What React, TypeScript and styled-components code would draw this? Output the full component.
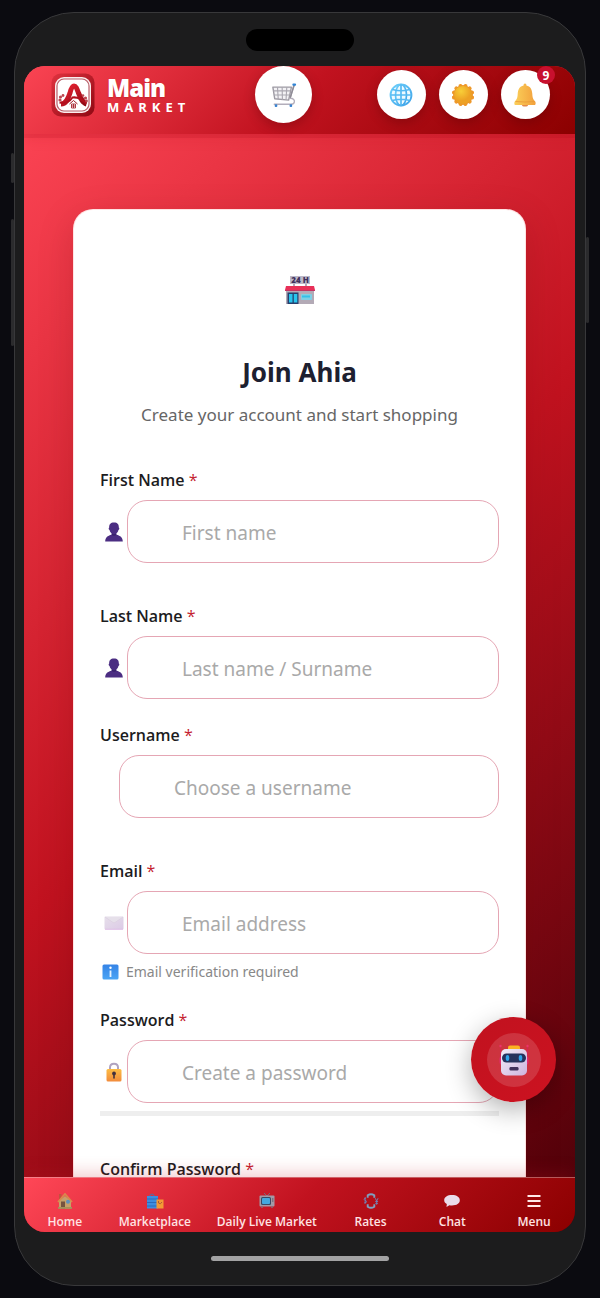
import React from 'react';
import styled, { createGlobalStyle } from 'styled-components';

const GlobalStyle = createGlobalStyle`
  *, *::before, *::after { box-sizing: border-box; }
  body {
    margin: 0;
    background: #0b0b10;
    font-family: "Noto Sans", "Open Sans", sans-serif;
  }
`;

const Page = styled.div`
  display: flex;
  height: 100vh;
  min-height: 640px;
  padding: 12px 14px;
`;

const Phone = styled.div`
  position: relative;
  display: flex;
  flex: 1;
  flex-direction: column;
  min-width: 0;
  padding: 0 10px 0 9px;
  border: 1px solid #38383a;
  border-radius: 60px;
  background: #1c1c1d;
`;

const SideButton = styled.span<{ $side: 'left' | 'right'; $top: number; $length: number }>`
  position: absolute;
  top: ${p => p.$top}px;
  ${p => p.$side}: -4px;
  width: 3px;
  height: ${p => p.$length}px;
  border-radius: 2px;
  background: #2b2b2d;
`;

const TopBezel = styled.div`
  display: flex;
  flex: none;
  justify-content: center;
  height: 53px;
  padding-top: 16px;
`;

const Notch = styled.div`
  width: 108px;
  height: 22px;
  border-radius: 11px;
  background: #000;
`;

const BottomBezel = styled.div`
  display: flex;
  flex: none;
  justify-content: center;
  height: 53px;
  padding-top: 24px;
`;

const HomeIndicator = styled.div`
  width: 178px;
  height: 5px;
  border-radius: 3px;
  background: #a2a2a3;
`;

const Screen = styled.div`
  position: relative;
  display: flex;
  flex: 1;
  flex-direction: column;
  min-height: 0;
  overflow: hidden;
  border-radius: 21px;
  background: linear-gradient(135deg, #ff4757 0%, #c1121f 50%, #4a0008 100%);
`;

const Header = styled.header`
  position: relative;
  z-index: 2;
  display: flex;
  flex: none;
  align-items: center;
  justify-content: space-between;
  padding: 0 25px 11px 27px;
  background: linear-gradient(135deg, #fa4453 0%, #c1121f 50%, #8b0000 100%);
  box-shadow: 0 4px 0 rgba(160, 0, 20, 0.14), 0 4px 12px rgba(193, 18, 31, 0.2);
`;

const Brand = styled.a`
  display: flex;
  align-items: center;
  gap: 12px;
  color: #fff;
  text-decoration: none;
`;

const BrandText = styled.span`
  display: flex;
  flex-direction: column;
`;

const BrandName = styled.span`
  font-size: 24px;
  font-weight: 900;
  line-height: 25px;
  letter-spacing: -1px;
  text-shadow: 0 1px 2px rgba(120, 0, 0, 0.25);
`;

const BrandSub = styled.span`
  font-family: "Open Sans", sans-serif;
  font-size: 13px;
  font-weight: 700;
  line-height: 15px;
  letter-spacing: 5px;
`;

const Actions = styled.div`
  display: flex;
  gap: 13px;
`;

const RoundButton = styled.button<{ $size: number }>`
  position: relative;
  display: grid;
  place-items: center;
  width: ${p => p.$size}px;
  height: ${p => p.$size}px;
  padding: 0;
  border: 0;
  border-radius: 50%;
  background: #fff;
  box-shadow: 0 4px 12px rgba(60, 0, 0, 0.28);
`;

const Badge = styled.span`
  position: absolute;
  top: -4px;
  right: -5px;
  width: 18px;
  height: 18px;
  border-radius: 50%;
  background: #c8102e;
  color: #fff;
  font: 700 12px/19px "Noto Sans", sans-serif;
  text-align: center;
`;

const Content = styled.main`
  flex: 1;
  min-height: 0;
  overflow: hidden;
  padding: 75px 49px 0;
`;

const Card = styled.form`
  padding: 66px 26px 40px;
  border: 1px solid rgba(255, 220, 220, 0.8);
  border-radius: 20px;
  background: #fff;
  box-shadow: 0 10px 36px rgba(90, 0, 10, 0.18);
`;

const Intro = styled.div`
  display: flex;
  flex-direction: column;
  align-items: center;
  margin-bottom: 40px;
  text-align: center;
`;

const Title = styled.h1`
  margin: 49px 0 12px;
  color: #1d2030;
  font-size: 26px;
  font-weight: 700;
  line-height: 36px;
`;

const Subtitle = styled.p`
  margin: 0;
  color: #666;
  font-size: 17px;
  line-height: 26px;
`;

const FieldBlock = styled.div<{ $gap: number }>`
  margin-bottom: ${p => p.$gap}px;
`;

const Label = styled.label`
  display: block;
  margin-bottom: 8px;
  color: #1c1c1e;
  font-family: "Open Sans", sans-serif;
  font-size: 16px;
  font-weight: 600;
  line-height: 24px;
`;

const Required = styled.span`
  color: #c41c30;
  font-weight: 500;
`;

const InputRow = styled.div<{ $indent: boolean }>`
  display: flex;
  align-items: center;
  padding-left: ${p => (p.$indent ? 19 : 0)}px;
`;

const InputIcon = styled.span`
  display: grid;
  flex: none;
  place-items: center;
  width: 27px;
`;

const Input = styled.input`
  flex: 1;
  min-width: 0;
  height: 63px;
  padding: 2px 20px 0 54px;
  border: 1px solid #e5a6b4;
  border-radius: 20px;
  background: #fff;
  color: #1c1c1e;
  font: 400 19px "Noto Sans", sans-serif;
  &::placeholder { color: #a9a9a9; opacity: 1; }
`;

const Hint = styled.p`
  display: flex;
  align-items: center;
  gap: 7px;
  margin: 8px 0 0;
  padding-left: 2px;
  color: #888;
  font-size: 14px;
  line-height: 20px;
`;

const Strength = styled.div`
  height: 5px;
  margin-top: 8px;
  background: #eee;
`;

const Assistant = styled.button`
  position: absolute;
  z-index: 4;
  right: 19px;
  bottom: 130px;
  display: grid;
  place-items: center;
  width: 85px;
  height: 85px;
  padding: 0;
  border: 0;
  border-radius: 50%;
  background: linear-gradient(135deg, #c1121f, #cc1220);
  box-shadow: 0 8px 26px rgba(0, 0, 0, 0.3);
`;

const AssistantCore = styled.span`
  display: grid;
  place-items: center;
  width: 54px;
  height: 54px;
  border-radius: 50%;
  background: rgba(255, 255, 255, 0.14);
`;

const TabBar = styled.nav`
  position: relative;
  z-index: 3;
  display: flex;
  flex: none;
  justify-content: space-around;
  padding: 15px 0 2px;
  border-top: 1px solid rgba(255, 255, 255, 0.35);
  background: linear-gradient(135deg, #ff4757 0%, #c1121f 50%, #8b0000 100%);
  box-shadow: 0 -4px 16px rgba(193, 18, 31, 0.22);
`;

const Tab = styled.a`
  display: flex;
  flex-direction: column;
  align-items: center;
  gap: 5px;
  min-width: 56px;
  color: #ffe3e3;
  font-family: "Open Sans", sans-serif;
  font-size: 12px;
  font-weight: 600;
  line-height: 16px;
  text-decoration: none;
  white-space: nowrap;
`;

const LogoIcon = () => (
  <svg width="44" height="44" viewBox="0 0 44 44" aria-hidden="true">
    <defs>
      <linearGradient id="logoFrame" x1="0" y1="0" x2="1" y2="1">
        <stop offset="0" stopColor="#e0323f" /><stop offset="1" stopColor="#8f0812" />
      </linearGradient>
      <linearGradient id="logoA" x1="0" y1="0" x2="1" y2="1">
        <stop offset="0" stopColor="#ee2534" /><stop offset="1" stopColor="#8d0713" />
      </linearGradient>
    </defs>
    <rect x="0.5" y="0.5" width="43" height="43" rx="9" fill="url(#logoFrame)" />
    <rect x="4" y="4" width="36" height="36" rx="9" fill="#fbeeee" />
    <rect x="6" y="6" width="32" height="32" rx="7" fill="#fff" stroke="#b9606b" strokeWidth="1.200" />
    <path d="M10 31c5 0 7-5 9-11 1-4 2-7 4-7s3 3 4.500 7c2 5 4 10 8 11" fill="none" stroke="url(#logoA)" strokeWidth="5" />
    <path d="M8.500 29.500q8 2 13-5 7-1 14 6" fill="none" stroke="#b30f1d" strokeWidth="2" />
    <g fill="#bd4650">
      <circle cx="9.500" cy="24" r="1.600" /><circle cx="12" cy="22.500" r="1.400" /><circle cx="9" cy="27" r="1.600" />
      <circle cx="32" cy="22.500" r="1.300" /><circle cx="34.500" cy="25" r="1.600" /><circle cx="35.500" cy="28" r="1.400" />
    </g>
    <path d="M18 30.500l4.500-3.500 4.500 3.500v6h-9z" fill="#fff" />
    <path d="M18.500 31l4-3.500 4 3.500" fill="none" stroke="#a01522" strokeWidth="1" />
    <path d="M20.500 31h4v4h-4zM22.500 31v4M20.500 33h4" fill="none" stroke="#a01522" strokeWidth="0.800" />
  </svg>
);

const CartIcon = () => (
  <svg width="26" height="26" viewBox="0 0 28 28" fill="none" aria-hidden="true">
    <path d="M2 5.500h20l-3 14-15-1.500z" fill="#f3f2f5" stroke="#9d9aa3" strokeWidth="1.500" strokeLinejoin="round" />
    <path d="M2.500 9.500h18.300M3 14h17M7 5.500l.8 13M12 5.500l.3 13.500M17 5.500l-.8 13.500" stroke="#aaa7b0" strokeWidth="1.200" />
    <path d="M25 3l-4.500 14.500c3.500 0 5.500 2 4.500 4.500-.5 1.500-2 2-4 2H3.500" stroke="#b3aebb" strokeWidth="1.500" strokeLinecap="round" />
    <path d="M25 3l-4.300 14" stroke="#8f8c96" strokeWidth="1.600" />
    <rect x="23" y="1.500" width="4" height="2.500" rx="1" fill="#3185d6" />
    <rect x="4" y="24" width="2.800" height="2.800" rx="1" fill="#3a82cf" />
    <rect x="20" y="24" width="2.800" height="2.800" rx="1" fill="#3a82cf" />
  </svg>
);

const GlobeIcon = () => (
  <svg width="24" height="24" viewBox="0 0 24 24" fill="none" aria-hidden="true">
    <defs><linearGradient id="globe" x1="0" y1="0" x2="1" y2="1"><stop stopColor="#6fd0fb" /><stop offset="1" stopColor="#3da2e8" /></linearGradient></defs>
    <circle cx="12" cy="12" r="10.500" fill="#effaff" stroke="url(#globe)" strokeWidth="1.800" />
    <ellipse cx="12" cy="12" rx="5.500" ry="10.500" stroke="url(#globe)" strokeWidth="1.700" />
    <path d="M3.500 6.500Q12 9 20.500 6.500M3.500 17.500Q12 15 20.500 17.500M1.500 12h21M12 1.500v21" stroke="#56b9f2" strokeWidth="1.700" />
  </svg>
);

const SunIcon = () => (
  <svg width="24" height="24" viewBox="0 0 24 24" aria-hidden="true">
    <defs><radialGradient id="sun" cx=".4" cy=".3"><stop stopColor="#f8cf38" /><stop offset="1" stopColor="#eda124" /></radialGradient></defs>
    {Array.from({ length: 12 }, (_, i) => (
      <circle key={i} cx="12" cy="2.600" r="2" fill="#f09a2c" transform={`rotate(${i * 30 + 15} 12 12)`} />
    ))}
    <circle cx="12" cy="12" r="9.500" fill="url(#sun)" stroke="#e8922a" strokeWidth="0.800" />
  </svg>
);

const BellIcon = () => (
  <svg width="24" height="24" viewBox="0 0 24 24" aria-hidden="true">
    <defs><linearGradient id="bell"><stop stopColor="#fbcf59" /><stop offset="1" stopColor="#f2a03c" /></linearGradient></defs>
    <ellipse cx="12" cy="22" rx="3" ry="1.600" fill="#e58a4c" />
    <path d="M12 .5c1 0 1.500.8 1.400 1.900 4 .8 5.600 4 5.900 8.300.2 4 .7 5.500 2.700 7.500 1 1.200.9 3.800-.6 3.800H2.600c-1.500 0-1.600-2.600-.6-3.800 2-2 2.500-3.500 2.700-7.500.3-4.300 1.900-7.500 5.900-8.300C10.500 1.300 11 .5 12 .5z" fill="url(#bell)" />
    <path d="M2.500 18.500q9.500 1 19 0" stroke="#e99938" strokeWidth=".8" fill="none" />
  </svg>
);

const StoreIcon = () => (
  <svg width="30" height="29" viewBox="0 0 30 29" overflow="visible" aria-hidden="true">
    <path d="M9 8v4M21 8v4" stroke="#9c8ca5" strokeWidth="1.500" />
    <rect x="5" y="0" width="20" height="8" fill="#bdb9c9" />
    <text x="15" y="7" textAnchor="middle" fontFamily="Open Sans, sans-serif" fontSize="8" fontWeight="800" fill="#40305c">24 H</text>
    <rect x="1" y="12" width="28" height="16" fill="#b3aab6" />
    <path d="M1 10h28l1 4H0z" fill="#e83058" /><path d="M0 14.500h30" stroke="#c43464" strokeWidth="1" />
    <rect x="2.500" y="16.500" width="11" height="11.500" fill="#263f6e" />
    <path d="M4 18h3.500v8.500H4zM8.800 18h3.500v8.500H8.800z" fill="#28c5ee" />
    <rect x="16" y="18" width="11" height="6" rx="1" fill="#7fcfe4" /><path d="M17 20.500h8" stroke="#35c0e8" strokeWidth="2" />
  </svg>
);

const PersonIcon = () => (
  <svg width="18" height="20" viewBox="0 0 18 20" aria-hidden="true">
    <path d="M9 .5c3.500 0 5 2 4.800 5 .8.200.7 2.300-.4 2.600-.3 1.700-1 2.700-2.100 3.400v1.300c4.300.8 6.500 3.200 6.500 6.700H.2c0-3.500 2.200-5.900 6.500-6.700v-1.300C5.600 10.800 4.900 9.800 4.600 8.100 3.500 7.800 3.400 5.700 4.200 5.500 4 2.500 5.500.5 9 .5z" fill="#4b2d82" />
    <path d="M6.700 11.500c1.500 1 3 1 4.600 0v1.500q-2.300 1.500-4.600 0z" fill="#38206b" />
  </svg>
);

const MailIcon = () => (
  <svg width="20" height="14" viewBox="0 0 20 14" aria-hidden="true">
    <defs><linearGradient id="mail" x1="0" y1="0" x2="1" y2="1"><stop stopColor="#e6dfea" /><stop offset="1" stopColor="#dccae6" /></linearGradient></defs>
    <rect x=".5" y=".5" width="19" height="13" rx="1" fill="url(#mail)" />
    <path d="M1 1l8 5.500q1 .7 2 0L19 1" fill="#e6e0ea" stroke="#dacfe0" strokeWidth=".7" />
    <path d="M1 13.300h18" stroke="#dcb8e4" strokeWidth=".8" />
  </svg>
);

const LockIcon = () => (
  <svg width="16" height="20" viewBox="0 0 16 20" aria-hidden="true">
    <defs><linearGradient id="lock" x1="0" y1="0" x2="0" y2="1"><stop stopColor="#fdbd45" /><stop offset="1" stopColor="#f28b3b" /></linearGradient></defs>
    <path d="M4 8V5.500C4 .5 12 .5 12 5.500V8" fill="none" stroke="#b0a3c0" strokeWidth="2" />
    <rect x=".5" y="7" width="15" height="12.500" rx="1.500" fill="url(#lock)" />
    <circle cx="8" cy="11.500" r="1.900" fill="#44313e" /><path d="M8 12v4" stroke="#44313e" strokeWidth="1.600" strokeLinecap="round" />
  </svg>
);

const InfoIcon = () => (
  <svg width="17" height="16" viewBox="0 0 17 16" aria-hidden="true">
    <defs><linearGradient id="info" x1="0" y1="0" x2="0" y2="1"><stop stopColor="#3583e6" /><stop offset="1" stopColor="#4ba5f5" /></linearGradient></defs>
    <rect x=".5" y=".5" width="16" height="15" rx="1.500" fill="url(#info)" />
    <circle cx="8.500" cy="3.800" r="1.200" fill="#fff" /><path d="M8.500 6.500v6.500" fill="none" stroke="#e6f3ff" strokeWidth="1.800" />
  </svg>
);

const RobotIcon = () => (
  <svg width="32" height="32" viewBox="0 0 32 32" aria-hidden="true">
    <defs><linearGradient id="bot" x1="0" y1="0" x2="1" y2="1"><stop stopColor="#f3edf8" /><stop offset="1" stopColor="#cdb4de" /></linearGradient></defs>
    <path d="M2.500 3v9M29.500 3v9" stroke="#d5205c" strokeWidth="0.800" /><circle cx="2.500" cy="2" r="1.200" fill="#ec3468" /><circle cx="29.500" cy="2" r="1.200" fill="#ec3468" />
    <rect x="1.500" y="12" width="29" height="9" rx="3" fill="#e32a72" />
    <rect x="10" y="1.500" width="12" height="6" rx="2" fill="#fbb322" />
    <rect x="3" y="5" width="26" height="26.500" rx="5" fill="url(#bot)" />
    <rect x="4" y="9.500" width="24" height="9" rx="4.500" fill="#26325c" />
    <ellipse cx="9.500" cy="14" rx="1.800" ry="3" fill="#2ea3e8" /><ellipse cx="22.500" cy="14" rx="1.800" ry="3" fill="#2ea3e8" />
    <rect x="11.500" y="23" width="9" height="3.500" rx="1.200" fill="#41305a" />
  </svg>
);

const HomeIcon = () => (
  <svg width="16" height="16" viewBox="0 0 16 16" aria-hidden="true">
    <path d="M2 1h2.500v5H2z" fill="#c2513e" /><path d="M2 8l6-5 6 5v7.500H2z" fill="#c6a06a" />
    <path d="M1 9l7-8 7 8" fill="none" stroke="#d98a4c" strokeWidth="1.800" />
    <rect x="4" y="8.500" width="4" height="7" fill="#76533f" /><circle cx="11" cy="8.700" r="2" fill="#5d91bd" /><path d="M1 14h14v1.700H1z" fill="#a3945b" />
  </svg>
);

const BagsIcon = () => (
  <svg width="18" height="16" viewBox="0 0 18 16" aria-hidden="true">
    <path d="M4 4V2q2-2 4 0v2" fill="none" stroke="#4d6fa8" /><rect x="1" y="3" width="11" height="12.500" fill="#3d8de0" />
    <path d="M1 6h11M1 9.500h11M1 13h11" stroke="#2c6bbb" /><rect x="10.500" y="6.500" width="7" height="9" fill="#f39a35" /><path d="M12.500 8v2q2 2 3.500-1" fill="none" stroke="#ae5a37" />
  </svg>
);

const TvIcon = () => (
  <svg width="16" height="16" viewBox="0 0 16 16" aria-hidden="true">
    <path d="M5 0l3 3 3-3" fill="none" stroke="#786c78" /><rect x=".5" y="2.500" width="15" height="11" rx="1" fill="#a29aa6" />
    <rect x="2" y="4" width="10" height="8" rx="1.500" fill="#3b4963" /><rect x="3" y="5" width="8" height="6" rx="1" fill="#43a9df" />
    <path d="M13.800 5v4" stroke="#6d6470" /><path d="M3 13.500v1.500M13 13.500v1.500" stroke="#806e7c" strokeWidth="1.500" />
  </svg>
);

const RatesIcon = () => (
  <svg width="16" height="16" viewBox="0 0 16 17" fill="none" aria-hidden="true">
    <path d="M4.500 5V2.500q3.500-2.500 7 0V5M11.500 12v2.500q-3.500 2.500-7 0V12" stroke="#7fa0c0" strokeWidth="2" />
    <path d="M2.800 5.500Q.5 5 .8 7q.3 1 2 1.300 1.500 2-2 2.200M1.800 4.500v7" stroke="#7480b4" strokeWidth="1" />
    <path d="M12.500 5.500l1.500 3 1.500-3M14 8.500v4M12.500 9h3M12.500 11h3" stroke="#7480b4" strokeWidth="1" />
  </svg>
);

const ChatIcon = () => (
  <svg width="16" height="16" viewBox="0 0 16 16" aria-hidden="true">
    <path d="M8 2c4.600 0 7.800 2 7.800 5.300S12.600 12.500 8 12.500c-1 0-1.800 0-2.600-.3L2.500 14l.3-3C1.200 10.200.2 9 .2 7.300.2 4 3.400 2 8 2z" fill="#eadcea" />
  </svg>
);

const MenuIcon = () => (
  <svg width="16" height="16" viewBox="0 0 16 16" aria-hidden="true">
    <path d="M1.500 3h13M1.500 8h13M1.500 13h13" stroke="#ffe9e9" strokeWidth="2" />
  </svg>
);

type FieldProps = {
  id: string;
  label: string;
  placeholder?: string;
  type?: string;
  gap: number;
  icon?: React.ReactNode;
  children?: React.ReactNode;
};

const Field = ({ id, label, placeholder, type = 'text', gap, icon, children }: FieldProps) => (
  <FieldBlock $gap={gap}>
    <Label htmlFor={id}>{label} <Required>*</Required></Label>
    <InputRow $indent={!icon}>
      {icon && <InputIcon>{icon}</InputIcon>}
      <Input id={id} type={type} placeholder={placeholder} required />
    </InputRow>
    {children}
  </FieldBlock>
);

const tabs = [
  { label: 'Home', icon: <HomeIcon /> },
  { label: 'Marketplace', icon: <BagsIcon /> },
  { label: 'Daily Live Market', icon: <TvIcon /> },
  { label: 'Rates', icon: <RatesIcon /> },
  { label: 'Chat', icon: <ChatIcon /> },
  { label: 'Menu', icon: <MenuIcon /> },
];

export default function App() {
  return (
    <Page>
      <GlobalStyle />
      <Phone>
        <SideButton $side="left" $top={140} $length={30} />
        <SideButton $side="left" $top={206} $length={127} />
        <SideButton $side="right" $top={224} $length={86} />
        <TopBezel><Notch /></TopBezel>
        <Screen>
          <Header>
            <Brand href="#">
              <LogoIcon />
              <BrandText>
                <BrandName>Main</BrandName>
                <BrandSub>MARKET</BrandSub>
              </BrandText>
            </Brand>
            <RoundButton type="button" $size={57} aria-label="Cart"><CartIcon /></RoundButton>
            <Actions>
              <RoundButton type="button" $size={49} aria-label="Language"><GlobeIcon /></RoundButton>
              <RoundButton type="button" $size={49} aria-label="Theme"><SunIcon /></RoundButton>
              <RoundButton type="button" $size={49} aria-label="Notifications"><BellIcon /><Badge>9</Badge></RoundButton>
            </Actions>
          </Header>
          <Content>
            <Card>
              <Intro>
                <StoreIcon />
                <Title>Join Ahia</Title>
                <Subtitle>Create your account and start shopping</Subtitle>
              </Intro>
              <Field id="first-name" label="First Name" placeholder="First name" gap={41} icon={<PersonIcon />} />
              <Field id="last-name" label="Last Name" placeholder="Last name / Surname" gap={24} icon={<PersonIcon />} />
              <Field id="username" label="Username" placeholder="Choose a username" gap={41} />
              <Field id="email" label="Email" type="email" placeholder="Email address" gap={26} icon={<MailIcon />}>
                <Hint><InfoIcon />Email verification required</Hint>
              </Field>
              <Field id="password" label="Password" type="password" placeholder="Create a password" gap={41} icon={<LockIcon />}>
                <Strength />
              </Field>
              <Field id="confirm-password" label="Confirm Password" type="password" gap={24} icon={<LockIcon />} />
            </Card>
          </Content>
          <Assistant type="button" aria-label="Assistant">
            <AssistantCore><RobotIcon /></AssistantCore>
          </Assistant>
          <TabBar>
            {tabs.map(tab => (
              <Tab key={tab.label} href="#">{tab.icon}<span>{tab.label}</span></Tab>
            ))}
          </TabBar>
        </Screen>
        <BottomBezel><HomeIndicator /></BottomBezel>
      </Phone>
    </Page>
  );
}
